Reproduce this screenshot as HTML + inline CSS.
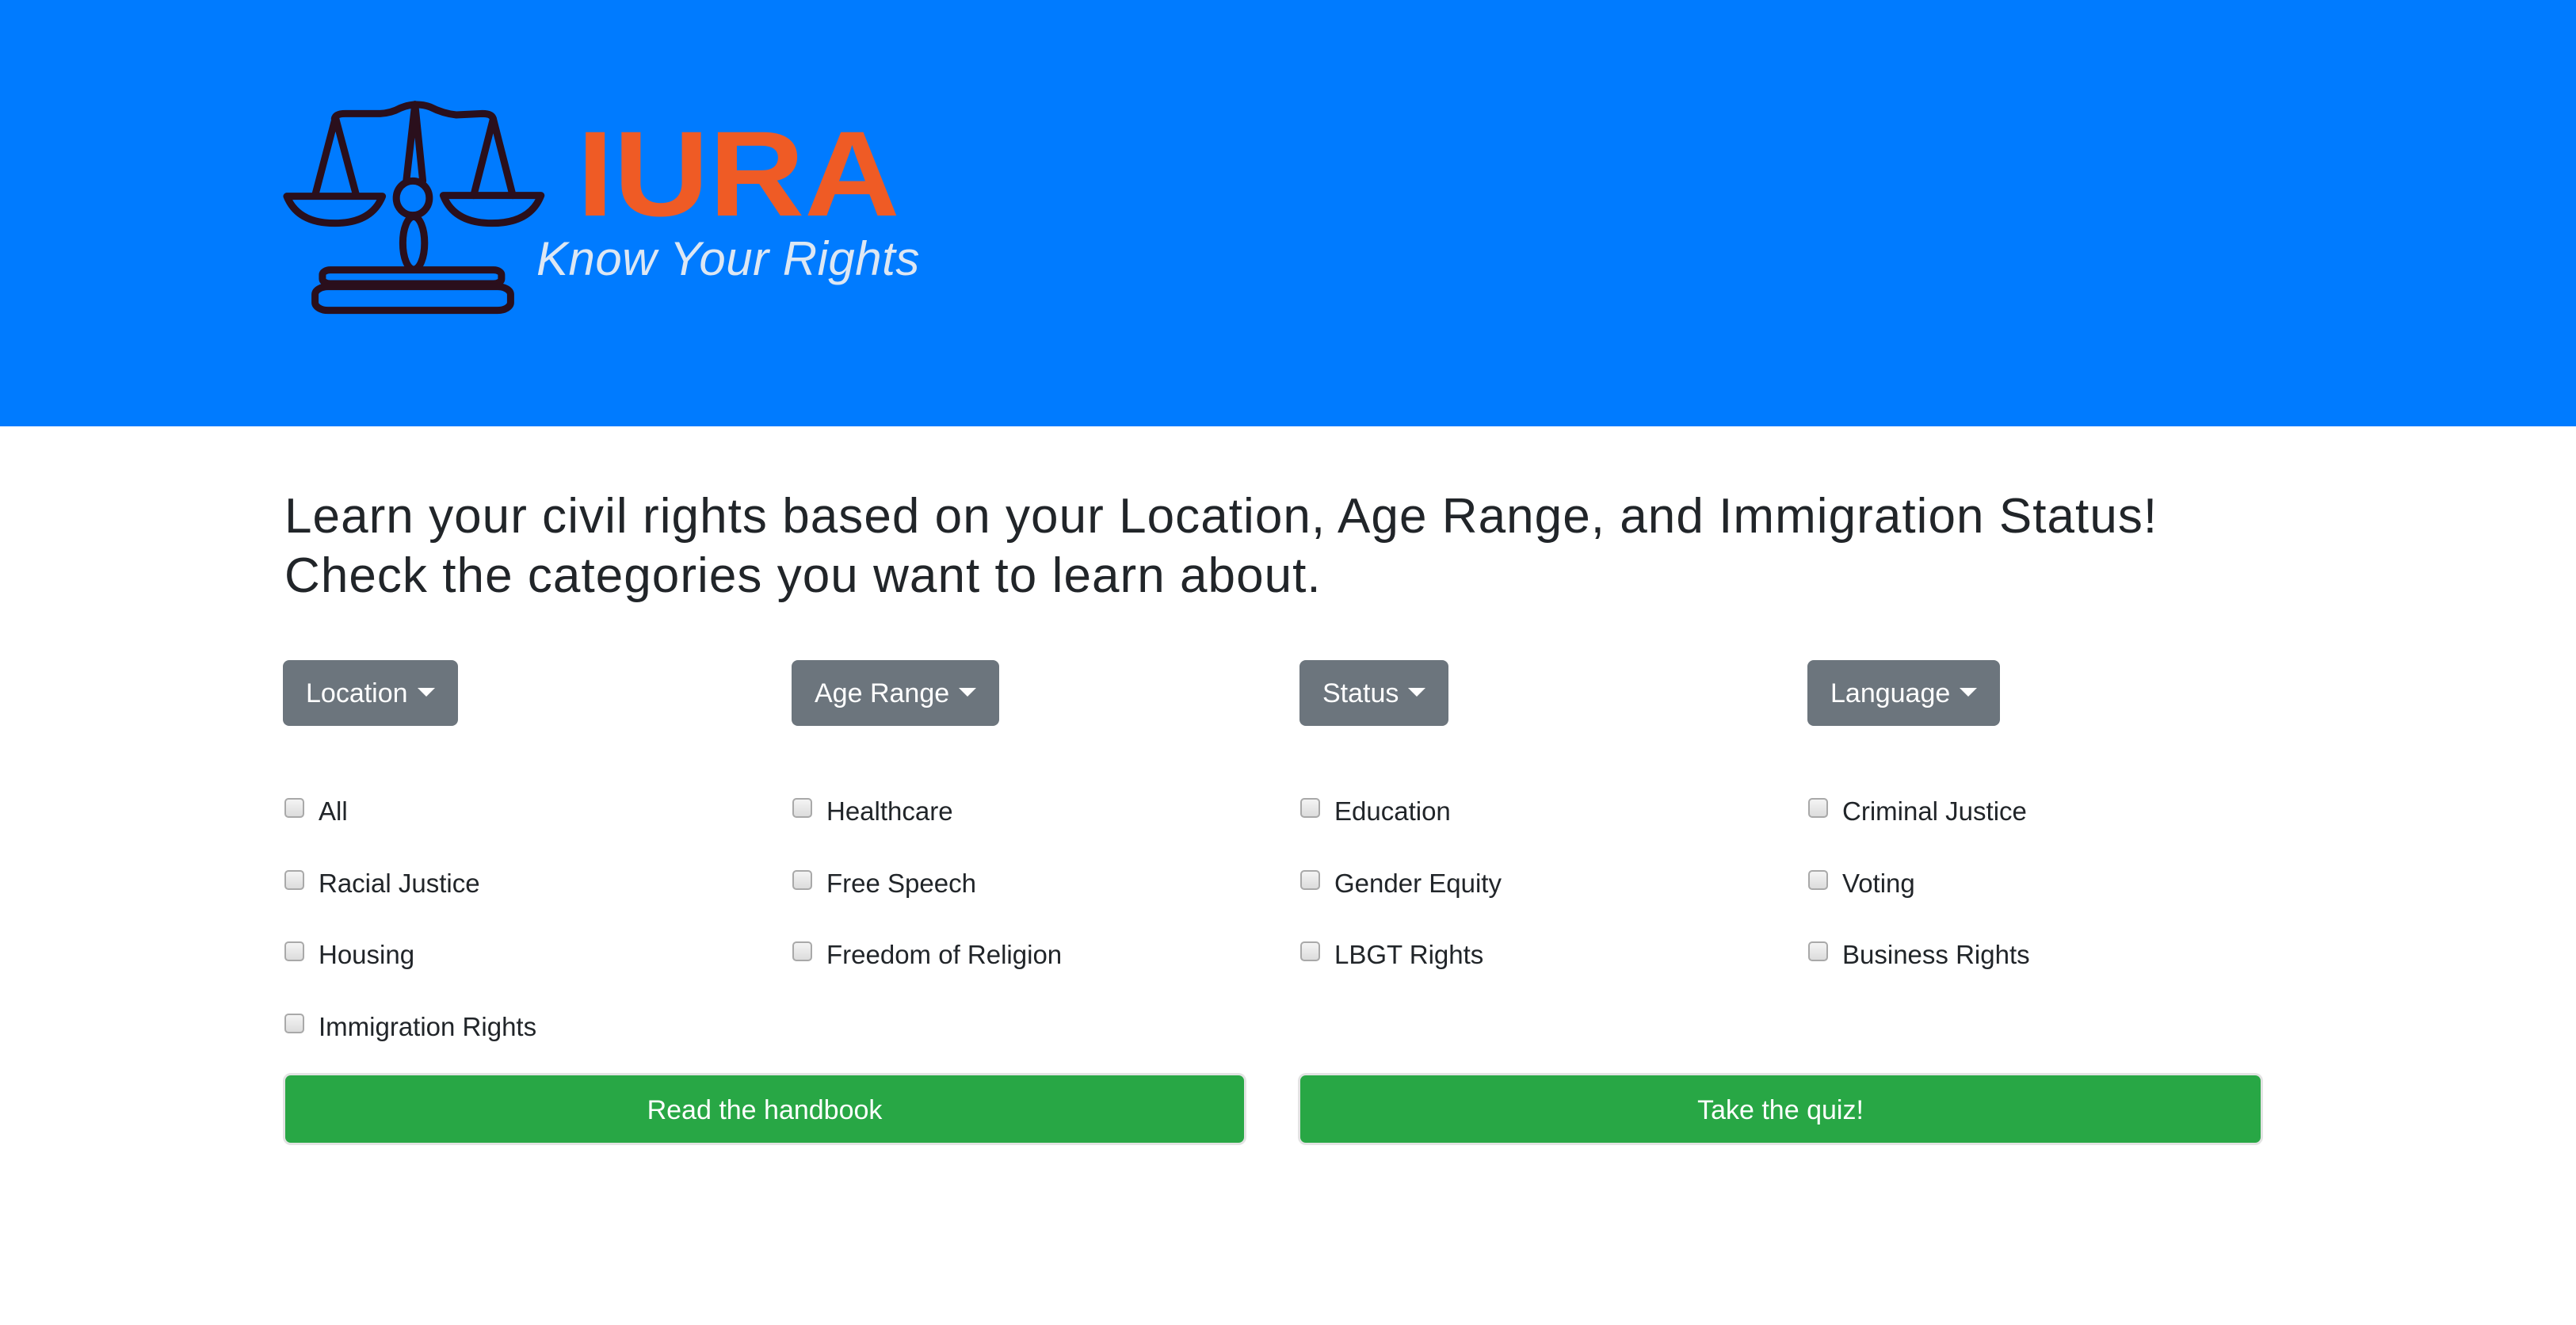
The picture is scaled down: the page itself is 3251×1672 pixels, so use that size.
<!DOCTYPE html>
<html><head><meta charset="utf-8"><style>
*{margin:0;padding:0;box-sizing:border-box}
body{width:3251px;height:1672px;background:#fff;font-family:"Liberation Sans",sans-serif;color:#212529;position:relative;overflow:hidden}
.hdr{position:absolute;left:0;top:0;width:3251px;height:538px;background:#007bff}
.abs{position:absolute;white-space:nowrap}
h1{position:absolute;left:359px;top:614px;font-size:62px;font-weight:normal;line-height:75px;letter-spacing:1.05px}
.dd{position:absolute;top:833px;height:83px;background:#6c757d;border-radius:8px;color:#fff;font-size:34px;line-height:85px;padding:0 29px}
.dd:after{content:"";display:inline-block;margin-left:12px;vertical-align:middle;border-left:11px solid transparent;border-right:11px solid transparent;border-top:11px solid #fff;position:relative;top:-4px}
.cb{position:absolute;font-size:33px;line-height:40px}
.cb i{position:absolute;left:0;top:4px;width:25px;height:25px;border:2px solid #a9a9a9;border-radius:5px;background:linear-gradient(#f4f4f4,#dcdcdc)}
.cb span{position:absolute;left:43px;top:1px;white-space:nowrap}
.gb{position:absolute;top:1357px;height:85px;background:#28a745;border-radius:7px;color:#fff;font-size:34px;line-height:88px;text-align:center;box-shadow:0 0 0 3px #e3e3e3}
</style></head><body>
<div class="hdr"></div>
<svg class="abs" style="left:340px;top:100px" width="860" height="320" viewBox="0 0 1568 960" preserveAspectRatio="none" fill="none" stroke="#2a0f1c" stroke-width="9" stroke-linecap="round" stroke-linejoin="round">
<path vector-effect="non-scaling-stroke" d="M150 150 Q152 130 175 130 L255 130 Q280 128 300 110 Q335 85 370 105 Q400 130 430 135 L490 130 Q512 130 515 150"/>
<path vector-effect="non-scaling-stroke" d="M335 95 L315 385 M335 95 L353 385"/>
<path vector-effect="non-scaling-stroke" d="M152 145 L105 440 M152 145 L200 440"/>
<path vector-effect="non-scaling-stroke" d="M515 150 L470 440 M515 150 L560 440"/>
<path vector-effect="non-scaling-stroke" d="M40 443 L260 443 Q235 545 150 545 Q65 545 40 443 Z"/>
<path vector-effect="non-scaling-stroke" d="M400 440 L625 440 Q600 545 512 545 Q425 545 400 440 Z"/>
<ellipse vector-effect="non-scaling-stroke" cx="330" cy="450" rx="38" ry="65"/>
<ellipse vector-effect="non-scaling-stroke" cx="332" cy="620" rx="25" ry="100"/>
<rect vector-effect="non-scaling-stroke" x="122" y="722" width="412" height="52" rx="18"/>
<rect vector-effect="non-scaling-stroke" x="105" y="785" width="450" height="90" rx="30"/>
</svg>
<div class="abs" style="left:728px;top:143px;font-size:153px;font-weight:bold;color:#ef5b25;line-height:153px;transform:scaleX(1.09);transform-origin:left">IURA</div>
<div class="abs" style="left:677px;top:287px;font-size:60px;font-style:italic;color:#dde7f3;line-height:80px;letter-spacing:0.5px">Know Your Rights</div>
<h1>Learn your civil rights based on your Location, Age Range, and Immigration Status!<br>Check the categories you want to learn about.</h1>
<div class="dd" style="left:357px">Location</div>
<div class="dd" style="left:999px">Age Range</div>
<div class="dd" style="left:1640px">Status</div>
<div class="dd" style="left:2281px">Language</div>

<div class="cb" style="left:359px;top:1003px"><i></i><span>All</span></div>
<div class="cb" style="left:359px;top:1094px"><i></i><span>Racial Justice</span></div>
<div class="cb" style="left:359px;top:1184px"><i></i><span>Housing</span></div>
<div class="cb" style="left:359px;top:1275px"><i></i><span>Immigration Rights</span></div>

<div class="cb" style="left:1000px;top:1003px"><i></i><span>Healthcare</span></div>
<div class="cb" style="left:1000px;top:1094px"><i></i><span>Free Speech</span></div>
<div class="cb" style="left:1000px;top:1184px"><i></i><span>Freedom of Religion</span></div>

<div class="cb" style="left:1641px;top:1003px"><i></i><span>Education</span></div>
<div class="cb" style="left:1641px;top:1094px"><i></i><span>Gender Equity</span></div>
<div class="cb" style="left:1641px;top:1184px"><i></i><span>LBGT Rights</span></div>

<div class="cb" style="left:2282px;top:1003px"><i></i><span>Criminal Justice</span></div>
<div class="cb" style="left:2282px;top:1094px"><i></i><span>Voting</span></div>
<div class="cb" style="left:2282px;top:1184px"><i></i><span>Business Rights</span></div>

<div class="gb" style="left:360px;width:1210px">Read the handbook</div>
<div class="gb" style="left:1641px;width:1212px">Take the quiz!</div>
</body></html>
